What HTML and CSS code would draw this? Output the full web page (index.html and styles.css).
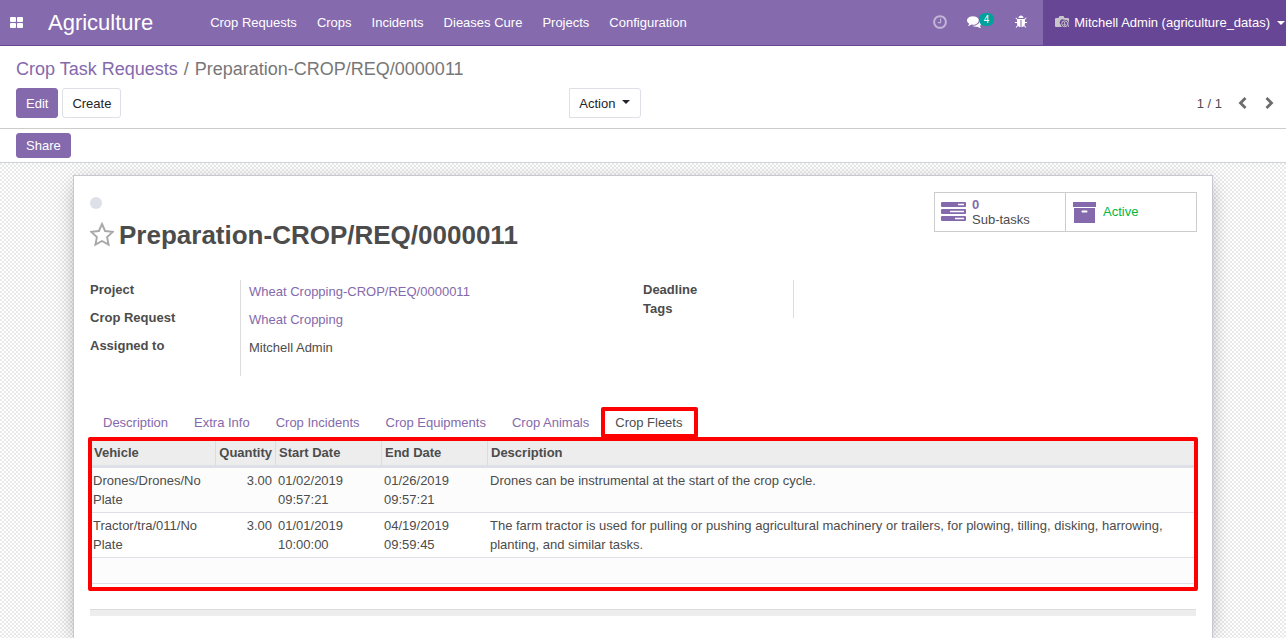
FILE: index.html
```html
<!DOCTYPE html>
<html lang="en">
<head>
<meta charset="utf-8">
<meta name="viewport" content="width=device-width, initial-scale=1">
<title>Preparation-CROP/REQ/0000011</title>
<link rel="stylesheet" href="styles.css">
</head>
<body>
<header class="navbar">
  <button class="apps" type="button" aria-label="Applications">
    <svg width="13" height="11" viewBox="0 0 13 11" fill="currentColor"><rect width="6" height="5" rx="1"/><rect x="7" width="6" height="5" rx="1"/><rect y="6" width="6" height="5" rx="1"/><rect x="7" y="6" width="6" height="5" rx="1"/></svg>
  </button>
  <a class="brand" href="#">Agriculture</a>
  <nav class="menu">
    <a href="#">Crop Requests</a>
    <a href="#">Crops</a>
    <a href="#">Incidents</a>
    <a href="#">Dieases Cure</a>
    <a href="#">Projects</a>
    <a href="#">Configuration</a>
  </nav>
  <div class="systray">
    <button class="tray dim" type="button" aria-label="Activities">
      <svg width="16" height="16" viewBox="0 0 1792 1792" fill="currentColor"><path d="M1024 544v448q0 14-9 23t-23 9h-320q-14 0-23-9t-9-23v-64q0-14 9-23t23-9h224v-352q0-14 9-23t23-9h64q14 0 23 9t9 23zm416 352q0-148-73-273t-198-198-273-73-273 73-198 198-73 273 73 273 198 198 273 73 273-73 198-198 73-273zm224 0q0 209-103 385.5t-279.5 279.5-385.5 103-385.5-103-279.5-279.5-103-385.5 103-385.5 279.5-279.5 385.5-103 385.5 103 279.5 279.5 103 385.5z"/></svg>
    </button>
    <button class="tray messages" type="button" aria-label="Messages">
      <svg width="15" height="15" viewBox="0 0 1792 1792" fill="currentColor"><path d="M1408 768q0 139-94 257t-256.500 186.500-353.500 68.500q-86 0-176-16-124 88-278 128-36 9-86 16h-3q-11 0-20.500-8t-11.500-21q-1-3-1-6.500t.5-6.500 2-6l2.500-5 3.500-5.500 4-5 4.500-5 4-4.500q5-6 23-25t26-29.500 22.500-29 25-38.500 20.500-44q-124-72-195-177t-71-224q0-139 94-257t256.500-186.500 353.500-68.500 353.500 68.500 256.500 186.500 94 257zm384 256q0 120-71 224.500t-195 176.500q10 24 20.500 44t25 38.500 22.500 29 26 29.500 23 25q1 1 4 4.500t4.500 5 4 5 3.500 5.500l2.500 5 2 6 .5 6.500-1 6.500q-3 14-13 22t-22 7q-50-7-86-16-154-40-278-128-90 16-176 16-271 0-472-132 58 4 88 4 161 0 309-45t264-129q125-92 192-212t67-254q0-77-23-152 129 71 204 178t75 230z"/></svg>
      <span class="badge">4</span>
    </button>
    <button class="tray debug" type="button" aria-label="Developer tools">
      <svg width="14" height="14" viewBox="0 0 1792 1792" fill="currentColor"><path d="M1696 960q0 26-19 45t-45 19h-224q0 171-67 290l208 209q19 19 19 45t-19 45q-18 19-45 19t-45-19l-198-197q-5 5-15 13t-42 28.500-65 36.500-82 29-97 13v-896h-128v896q-51 0-101.500-13.500t-87-33-66-39-43.500-32.500l-15-14-183 207q-20 21-48 21-24 0-43-16-19-18-20.500-44.500t15.500-46.500l202-227q-58-114-58-274h-224q-26 0-45-19t-19-45 19-45 45-19h224v-294l-173-173q-19-19-19-45t19-45 45-19 45 19l173 173h844l173-173q19-19 45-19t45 19 19 45-19 45l-173 173v294h224q26 0 45 19t19 45zm-480-576h-640q0-133 93.500-226.500t226.500-93.500 226.500 93.500 93.500 226.500z"/></svg>
    </button>
    <button class="user" type="button">
      <svg width="14" height="14" viewBox="0 0 14 14"><path d="M1 2h2.500l1-2h4l1 2H13q1 0 1 1v7q0 1-1 1H1q-1 0-1-1V3q0-1 1-1z" fill="#c9c6cb"/><path d="M7 8.500A2.300 2.300 0 1 1 8.500 4" fill="none" stroke="#684696" stroke-width="1.200"/><circle cx="9.700" cy="7.800" r="4" fill="#684696"/><circle cx="9.700" cy="7.800" r="2.900" fill="none" stroke="#c9c6cb"/><path d="M9.700 6v3.500M8.500 8.500l1.200 1 1.200-1" fill="none" stroke="#c9c6cb"/></svg>
      <span>Mitchell Admin (agriculture_datas)</span>
      <i class="caret"></i>
    </button>
  </div>
</header>

<section class="control-panel">
  <nav class="breadcrumb" aria-label="Breadcrumb"><a href="#">Crop Task Requests</a><span class="slash">/</span><span>Preparation-CROP/REQ/0000011</span></nav>
  <div class="controls">
    <div class="controls-left">
      <div class="buttons">
        <button class="btn primary" type="button">Edit</button>
        <button class="btn" type="button">Create</button>
      </div>
      <button class="btn action" type="button">Action <i class="caret"></i></button>
    </div>
    <div class="pager">
      <span>1 / 1</span>
      <button type="button" aria-label="Previous"><svg width="9" height="12" viewBox="0 0 9 12"><path d="M7.500 1L2.500 6l5 5" fill="none" stroke="currentColor" stroke-width="2.800"/></svg></button>
      <button type="button" aria-label="Next"><svg width="9" height="12" viewBox="0 0 9 12"><path d="M1.500 1l5 5-5 5" fill="none" stroke="currentColor" stroke-width="2.800"/></svg></button>
    </div>
  </div>
</section>

<div class="statusbar"><button class="btn primary small" type="button">Share</button></div>

<main class="content">
  <article class="sheet">
    <div class="sheet-head">
      <div class="title-block">
        <button class="color-dot" type="button" aria-label="Kanban state"></button>
        <div class="title">
          <button class="star" type="button" aria-label="Priority"><svg width="24" height="26" viewBox="0 0 24 26"><path d="M12 2l3.100 7 7.600.9-5.600 5.200 1.500 7.600L12 19l-6.600 3.700 1.500-7.600L1.300 9.900 8.900 9z" fill="none" stroke="#a8a8a8" stroke-width="1.900"/></svg></button>
          <h1>Preparation-CROP/REQ/0000011</h1>
        </div>
      </div>
      <div class="stats">
        <button class="stat" type="button">
          <svg width="25" height="20" viewBox="0 0 25 20"><g fill="#8469ac"><rect width="25" height="5" rx="1"/><rect y="7" width="25" height="5" rx="1"/><rect y="14" width="25" height="5" rx="1"/></g><path d="M17 2.500h6M9 9.500h14M14 16.500h9" stroke="#fff" stroke-width="1.400"/></svg>
          <span><b>0</b><br>Sub-tasks</span>
        </button>
        <button class="stat active" type="button">
          <svg width="23" height="21" viewBox="0 0 23 21"><path d="M0 0h23v5H0zM1 6h21v15H1z" fill="#8469ac"/><path d="M9.500 9.500h4" stroke="#fff" stroke-width="2" stroke-linecap="round"/></svg>
          <span>Active</span>
        </button>
      </div>
    </div>

    <div class="groups">
      <dl class="group roomy">
        <dt>Project</dt><dd><a href="#">Wheat Cropping-CROP/REQ/0000011</a></dd>
        <dt>Crop Request</dt><dd><a href="#">Wheat Cropping</a></dd>
        <dt>Assigned to</dt><dd>Mitchell Admin</dd>
      </dl>
      <dl class="group">
        <dt>Deadline</dt><dd></dd>
        <dt>Tags</dt><dd></dd>
      </dl>
    </div>

    <nav class="tabs">
      <a href="#">Description</a>
      <a href="#">Extra Info</a>
      <a href="#">Crop Incidents</a>
      <a href="#">Crop Equipments</a>
      <a href="#">Crop Animals</a>
      <a href="#" class="current" aria-current="page">Crop Fleets</a>
    </nav>

    <div class="table-wrap">
      <table>
        <thead>
          <tr><th class="c-vehicle">Vehicle</th><th class="c-qty">Quantity</th><th class="c-date">Start Date</th><th class="c-date">End Date</th><th>Description</th></tr>
        </thead>
        <tbody>
          <tr><td>Drones/Drones/No Plate</td><td class="num">3.00</td><td>01/02/2019 09:57:21</td><td>01/26/2019 09:57:21</td><td>Drones can be instrumental at the start of the crop cycle.</td></tr>
          <tr><td>Tractor/tra/011/No Plate</td><td class="num">3.00</td><td>01/01/2019 10:00:00</td><td>04/19/2019 09:59:45</td><td>The farm tractor is used for pulling or pushing agricultural machinery or trailers, for plowing, tilling, disking, harrowing, planting, and similar tasks.</td></tr>
          <tr><td colspan="5">&nbsp;</td></tr>
        </tbody>
      </table>
    </div>
    <div class="divider"></div>
  </article>
</main>
</body>
</html>
```
FILE: styles.css
```css
* { box-sizing: border-box; }

body {
  margin: 0;
  min-height: 100vh;
  display: flex;
  flex-direction: column;
  background: #fff;
  color: #4c4c4c;
  font: 13px/19px "Liberation Sans", Arial, sans-serif;
}

a { color: #8469ac; text-decoration: none; }
button { font: inherit; color: inherit; background: none; border: 0; padding: 0; }
svg { display: block; flex: none; }

.caret {
  display: inline-block;
  border: 4px solid transparent;
  border-top-color: currentColor;
  border-bottom: 0;
}

/* Top bar */
.navbar {
  display: flex;
  align-items: stretch;
  height: 46px;
  background: #856aad;
  border-bottom: 1px solid #684696;
  color: #fff;
  white-space: nowrap;
}
.navbar a { color: #fff; }
.apps { padding: 0 9px 1px 10px; }
.brand { margin-left: 16px; font-size: 22px; line-height: 45px; }
.menu { display: flex; margin-left: 47px; line-height: 45px; }
.menu a { padding: 0 10px; }
.systray { display: flex; margin-left: auto; }
.tray { display: flex; align-items: center; padding: 0 10px 2px; }
.tray.dim { color: #c2b4d6; }
.messages { padding-right: 0; padding-left: 9px; }
.badge {
  align-self: flex-start;
  margin: 13px 0 0 -3px;
  padding: 0 5px;
  border-radius: 6px;
  background: #00a09d;
  font-size: 10px;
  line-height: 13px;
}
.debug { padding: 0 15px 1px 20px; }
.user { display: flex; align-items: center; padding: 0 1px 0 12px; background: #684696; }
.user span { margin: 0 7px 0 5px; }

/* Control panel */
.control-panel { padding: 12px 16px 10px; border-bottom: 1px solid #ccc; }
.breadcrumb { font-size: 18px; line-height: 22px; color: #777; }
.slash { padding: 0 6px; }
.controls { display: grid; grid-template-columns: 1fr 1fr; margin-top: 8px; }
.controls-left { display: flex; justify-content: space-between; padding-right: 2px; }
.buttons { display: flex; gap: 4px; }
.btn {
  padding: 5px 9px 4px;
  border: 1px solid #dee0e8;
  border-radius: 3px;
  background: #fff;
  color: #212529;
}
.btn.primary { background: #8469ac; border-color: #8469ac; color: #fff; }
.btn.small { padding-top: 2px; padding-bottom: 2px; }
.action { border-radius: 0 3px 3px 0; padding-right: 10px; }
.action .caret { margin: 0 0 4px 3px; }
.controls .btn { height: 30px; }
.pager { display: flex; align-items: center; justify-content: flex-end; gap: 16px; margin-right: -4px; }
.pager button { color: #6c6c6c; }
.pager button + button { margin-left: 2px; }
.statusbar { padding: 4px 16px; border-bottom: 1px solid #ced4da; display: flex; }

/* Form sheet */
.content {
  flex: 1;
  display: flex;
  justify-content: center;
  padding: 12px 16px 0;
  overflow: hidden;
  background: repeating-conic-gradient(#fff 0 25%, #e9e9e9 0 50%) 0 0 / 4px 4px;
}
.sheet {
  width: 100%;
  max-width: 1140px;
  padding: 16px 16px 0;
  background: #fff;
  border: 1px solid #c8c8d3;
  border-bottom: 0;
  box-shadow: 0 5px 20px -5px rgba(0, 0, 0, .4);
}
.sheet-head { display: flex; justify-content: space-between; align-items: flex-start; }
.title-block { padding-top: 5px; }
.color-dot { display: block; width: 12px; height: 12px; border-radius: 50%; background: #dee0e8; }
.title { display: flex; align-items: center; gap: 5px; margin-top: 10px; }
h1 { margin: 0; font-size: 26px; line-height: 32px; }
.stats { display: flex; border: 1px solid #ccc; margin-right: -1px; }
.stat { display: flex; align-items: center; gap: 6px; width: 130px; height: 38px; padding-left: 6px; text-align: left; line-height: 15px; }
.stat b { color: #8469ac; }
.stat + .stat { width: 131px; border-left: 1px solid #ccc; padding-left: 7px; gap: 7px; }
.stat.active { color: #00b83f; }
.stat.active span { padding-bottom: 2px; }

.groups { display: grid; grid-template-columns: 1fr 1fr; align-items: start; margin-top: 29px; }
.group { display: grid; grid-template-columns: 151px 1fr; margin: 0; }
.group dt { font-weight: bold; border-right: 1px solid #ddd; min-height: 19px; }
.group dd { margin: 0; padding-left: 8px; }
.roomy dt { height: 28px; }
.roomy dd { padding-top: 2px; }
.roomy dt:last-of-type { height: 40px; }

/* Notebook */
.tabs { display: flex; margin-top: 32px; }
.tabs a { position: relative; padding: 5px 13px 6px; }
.tabs .current { color: #4c4c4c; }
.tabs .current::after,
.table-wrap::after {
  content: "";
  position: absolute;
  border: 4px solid #f00;
  border-radius: 2px;
  pointer-events: none;
}
.tabs .current::after { inset: -1px -3px 0 -1px; }
.table-wrap { position: relative; }
.table-wrap::after { inset: -1px -2px -7px; }

table { width: 100%; table-layout: fixed; border-collapse: separate; border-spacing: 0; }
th, td { text-align: left; vertical-align: top; }
th { padding: 5px 3px 3px; background: #ededed; border-left: 1px solid #dcdcdc; border-bottom: 3px solid #dee0e8; }
td { padding: 3px; border-bottom: 1px solid #dee0e8; }
tbody tr:nth-child(odd) { background: #fcfcfc; }
.c-vehicle { width: 125px; }
.c-qty { width: 60px; }
.c-date { width: 106px; }
td:nth-child(3), td:nth-child(4) { padding-right: 30px; }
.c-qty, .num { text-align: right; }

.divider { height: 7px; margin-top: 25px; background: #ededed; border-top: 1px solid #dcdcdc; }
```
